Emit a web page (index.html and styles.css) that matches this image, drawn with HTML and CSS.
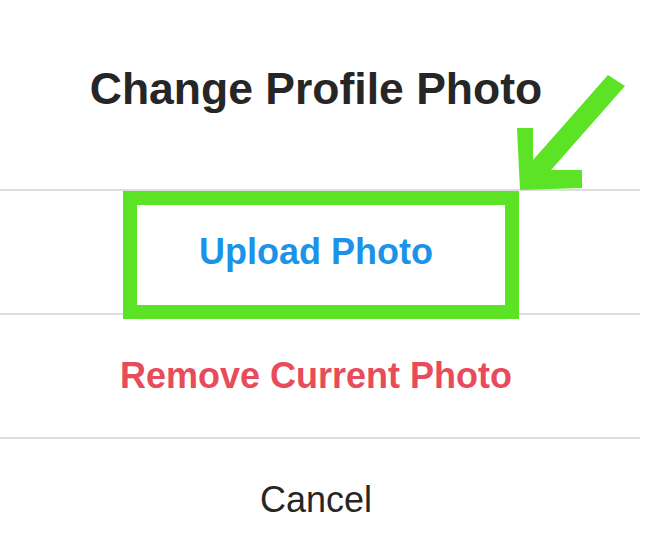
FILE: index.html
```html
<!DOCTYPE html>
<html lang="en">
<head>
<meta charset="utf-8">
<title>Change Profile Photo</title>
<link rel="stylesheet" href="styles.css">
</head>
<body>
<div class="dialog">
  <div class="dialog-header">
    <h1 class="dialog-title">Change Profile Photo</h1>
  </div>
  <button class="dialog-row row-upload" type="button">Upload Photo</button>
  <button class="dialog-row row-remove" type="button">Remove Current Photo</button>
  <button class="dialog-row row-cancel" type="button">Cancel</button>

  <div class="highlight-box"></div>
  <svg class="highlight-arrow" width="650" height="556" viewBox="0 0 650 556" aria-hidden="true">
    <polygon points="520,190 517,128 533,128 533,160 608,75 625,86 551,170 582,170 582,188" fill="#5ce326"/>
  </svg>
</div>
</body>
</html>
```

FILE: styles.css
```css
* { box-sizing: border-box; }

html, body {
  margin: 0;
  padding: 0;
  background: #ffffff;
}

.dialog {
  position: relative;
  width: 650px;
  height: 556px;
  overflow: hidden;
  background: #ffffff;
  font-family: "Liberation Sans", Arial, sans-serif;
  display: flex;
  flex-direction: column;
}

.dialog-header {
  flex: 0 0 189px;
  height: 189px;
  width: 640px;
  display: flex;
  align-items: center;
  justify-content: center;
  padding: 0 8px 12px 0;
}

.dialog-title {
  margin: 0;
  font-size: 44.5px;
  font-weight: 700;
  color: #262626;
  letter-spacing: 0;
}

.dialog-row {
  flex: 0 0 124px;
  height: 124px;
  width: 640px;
  margin: 0;
  padding: 0 8px 0 0;
  border: 0;
  border-top: 2px solid #dedede;
  background: #ffffff;
  font-family: "Liberation Sans", Arial, sans-serif;
  font-size: 36px;
  display: flex;
  align-items: center;
  justify-content: center;
}

.row-upload {
  color: #1b93e8;
  font-weight: 700;
}

.row-remove {
  color: #e84b5a;
  font-weight: 700;
}

.row-cancel {
  color: #262626;
  font-weight: 400;
}

.highlight-box {
  position: absolute;
  left: 123px;
  top: 191px;
  width: 396px;
  height: 128px;
  border: 14px solid #5ce326;
}

.highlight-arrow {
  position: absolute;
  left: 0;
  top: 0;
}
```
